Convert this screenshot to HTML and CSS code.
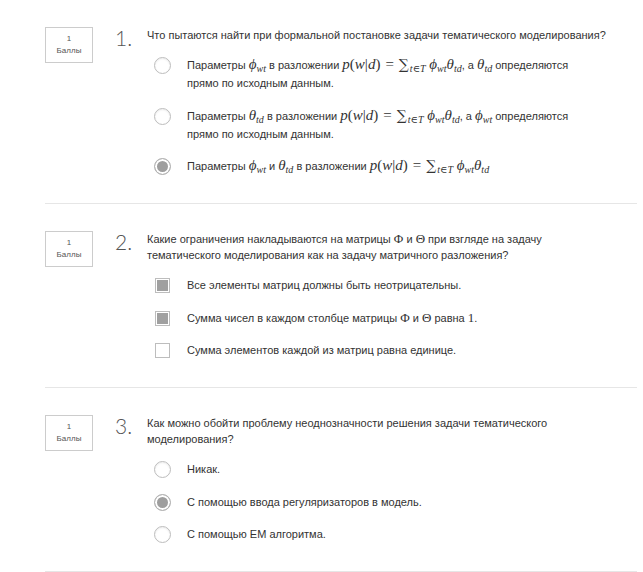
FILE: index.html
```html
<!DOCTYPE html>
<html lang="ru">
<head>
<meta charset="utf-8">
<link rel="stylesheet" href="styles.css">
</head>
<body>
<div class="quiz">

  <section class="q">
    <div class="score"><span>1</span><span>Баллы</span></div>
    <div class="num">1.</div>
    <div class="body">
      <div class="qtext">Что пытаются найти при формальной постановке задачи тематического моделирования?</div>
      <div class="opts">
        <div class="opt">
          <span class="radio"></span>
          <span class="otext">Параметры <span class="m"><i>ϕ</i><sub><i>wt</i></sub></span> в разложении <span class="m"><i>p</i>(<i>w</i>|<i>d</i>)<span class="eq">=</span><span class="sum">∑</span><sub><i>t</i>∈<i>T</i></sub> <i>ϕ</i><sub><i>wt</i></sub><i>θ</i><sub><i>td</i></sub></span>, а <span class="m"><i>θ</i><sub><i>td</i></sub></span> определяются прямо по исходным данным.</span>
        </div>
        <div class="opt">
          <span class="radio"></span>
          <span class="otext">Параметры <span class="m"><i>θ</i><sub><i>td</i></sub></span> в разложении <span class="m"><i>p</i>(<i>w</i>|<i>d</i>)<span class="eq">=</span><span class="sum">∑</span><sub><i>t</i>∈<i>T</i></sub> <i>ϕ</i><sub><i>wt</i></sub><i>θ</i><sub><i>td</i></sub></span>, а <span class="m"><i>ϕ</i><sub><i>wt</i></sub></span> определяются прямо по исходным данным.</span>
        </div>
        <div class="opt">
          <span class="radio on"></span>
          <span class="otext">Параметры <span class="m"><i>ϕ</i><sub><i>wt</i></sub></span> и <span class="m"><i>θ</i><sub><i>td</i></sub></span> в разложении <span class="m"><i>p</i>(<i>w</i>|<i>d</i>)<span class="eq">=</span><span class="sum">∑</span><sub><i>t</i>∈<i>T</i></sub> <i>ϕ</i><sub><i>wt</i></sub><i>θ</i><sub><i>td</i></sub></span></span>
        </div>
      </div>
    </div>
  </section>

  <section class="q">
    <div class="score"><span>1</span><span>Баллы</span></div>
    <div class="num">2.</div>
    <div class="body">
      <div class="qtext">Какие ограничения накладываются на матрицы <span class="mu">Φ</span> и <span class="mu">Θ</span> при взгляде на задачу тематического моделирования как на задачу матричного разложения?</div>
      <div class="opts">
        <div class="opt">
          <span class="check on"></span>
          <span class="otext">Все элементы матриц должны быть неотрицательны.</span>
        </div>
        <div class="opt">
          <span class="check on"></span>
          <span class="otext">Сумма чисел в каждом столбце матрицы <span class="mu">Φ</span> и <span class="mu">Θ</span> равна <span class="mu">1</span>.</span>
        </div>
        <div class="opt">
          <span class="check"></span>
          <span class="otext">Сумма элементов каждой из матриц равна единице.</span>
        </div>
      </div>
    </div>
  </section>

  <section class="q">
    <div class="score"><span>1</span><span>Баллы</span></div>
    <div class="num">3.</div>
    <div class="body">
      <div class="qtext">Как можно обойти проблему неоднозначности решения задачи тематического моделирования?</div>
      <div class="opts">
        <div class="opt">
          <span class="radio"></span>
          <span class="otext">Никак.</span>
        </div>
        <div class="opt">
          <span class="radio on"></span>
          <span class="otext">С помощью ввода регуляризаторов в модель.</span>
        </div>
        <div class="opt">
          <span class="radio"></span>
          <span class="otext">С помощью EM алгоритма.</span>
        </div>
      </div>
    </div>
  </section>

</div>
</body>
</html>
```

FILE: styles.css
```css
html, body {
  margin: 0;
  padding: 0;
  background: #ffffff;
}

body {
  font-family: "Liberation Sans", Arial, sans-serif;
  color: #333333;
}

.quiz {
  margin-left: 45px;
  width: 592px;
}

.q {
  display: flex;
  align-items: flex-start;
  padding: 27px 0 28px;
  border-bottom: 1px solid #e6e6e6;
}

.score {
  width: 46px;
  height: 34px;
  border: 1px solid #cccccc;
  display: flex;
  flex-direction: column;
  align-items: center;
  justify-content: center;
  font-size: 8px;
  line-height: 12px;
  color: #555555;
  flex-shrink: 0;
}

.num {
  margin-left: 22px;
  width: 32px;
  flex-shrink: 0;
  font-family: "Lato", "Liberation Sans", sans-serif;
  font-weight: 300;
  font-size: 21px;
  line-height: 20px;
  color: #555555;
  margin-top: 1px;
}

.body {
  width: 462px;
}

.qtext {
  font-size: 11px;
  line-height: 16px;
}

.opts {
  display: flex;
  flex-direction: column;
  gap: 14.5px;
  margin-top: 13px;
  margin-left: 7px;
}

.opt {
  display: flex;
  align-items: flex-start;
}

.otext {
  margin-left: 16px;
  width: 388px;
  font-size: 11px;
  line-height: 18px;
}

.radio {
  width: 17px;
  height: 17px;
  border-radius: 50%;
  border: 1px solid #bdbdbd;
  box-shadow: inset 0 1px 2px rgba(0, 0, 0, 0.08);
  background: #ffffff;
  flex-shrink: 0;
  box-sizing: border-box;
  margin-top: 1px;
}

.radio.on {
  background: #9e9e9e;
  box-shadow: inset 0 0 0 2px #ffffff;
  border-color: #b5b5b5;
}

.check {
  width: 15px;
  height: 15px;
  border: 1px solid #bdbdbd;
  box-sizing: border-box;
  background: #ffffff;
  flex-shrink: 0;
  margin-top: 2px;
  margin-left: 1px;
  margin-right: 1px;
}

.check.on {
  background: #a0a0a0;
  box-shadow: inset 0 0 0 1px #ffffff;
}

.m {
  font-family: "Liberation Serif", "DejaVu Serif", serif;
  font-size: 15px;
  white-space: nowrap;
  line-height: 0;
}

.m i {
  font-style: italic;
}

.m sub {
  font-size: 10px;
  vertical-align: -3px;
  line-height: 0;
}

.eq {
  margin: 0 5px;
}

.sum {
  font-family: "DejaVu Serif", serif;
  font-size: 14px;
  margin-right: 1px;
}

.mu {
  font-family: "Liberation Serif", "DejaVu Serif", serif;
  font-size: 13px;
}
```
